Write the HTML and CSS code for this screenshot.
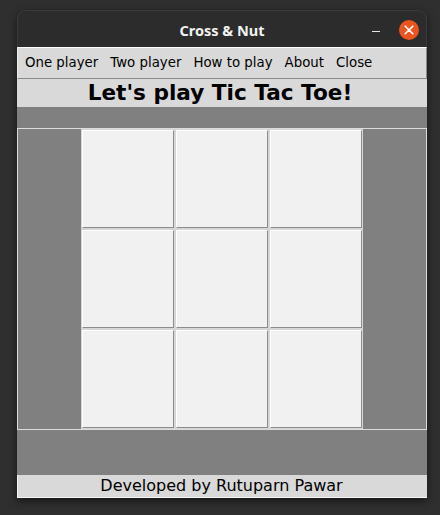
FILE: index.html
```html
<!DOCTYPE html>
<html lang="en">
<head>
<meta charset="utf-8">
<title>Cross &amp; Nut</title>
<link rel="stylesheet" href="styles.css">
</head>
<body>
<div class="window">
  <div class="titlebar">
    <div class="tb-spacer"></div>
    <div class="tb-title">Cross &amp; Nut</div>
    <div class="tb-controls">
      <span class="tb-min"><span class="tb-min-line"></span></span>
      <span class="tb-close">
        <svg width="20" height="20" viewBox="0 0 20 20"><circle cx="10" cy="10" r="10" fill="#e95420"/><path d="M6.2 6.2 L13.8 13.8 M13.8 6.2 L6.2 13.8" stroke="#fff" stroke-width="1.6" stroke-linecap="round"/></svg>
      </span>
    </div>
  </div>
  <div class="menubar">
    <span class="menu-item">One player</span>
    <span class="menu-item">Two player</span>
    <span class="menu-item">How to play</span>
    <span class="menu-item">About</span>
    <span class="menu-item">Close</span>
  </div>
  <div class="heading">Let's play Tic Tac Toe!</div>
  <div class="gap-top"></div>
  <div class="board-frame">
    <div class="board">
      <div class="cell"><button class="btn"></button></div>
      <div class="cell"><button class="btn"></button></div>
      <div class="cell"><button class="btn"></button></div>
      <div class="cell"><button class="btn"></button></div>
      <div class="cell"><button class="btn"></button></div>
      <div class="cell"><button class="btn"></button></div>
      <div class="cell"><button class="btn"></button></div>
      <div class="cell"><button class="btn"></button></div>
      <div class="cell"><button class="btn"></button></div>
    </div>
  </div>
  <div class="gap-bottom"></div>
  <div class="footer">Developed by Rutuparn Pawar</div>
</div>
</body>
</html>
```
FILE: styles.css
```css
html, body {
  margin: 0;
  padding: 0;
}
body {
  background: #2f2f2f;
  width: 440px;
  height: 515px;
  overflow: hidden;
  font-family: "DejaVu Sans", sans-serif;
}
.window {
  margin: 10px 0 0 17px;
  width: 410px;
  box-shadow: 0 3px 8px rgba(0, 0, 0, 0.55);
  border-radius: 9px 9px 0 0;
}
.titlebar {
  box-sizing: border-box;
  height: 37px;
  background: #2c2c2c;
  border: 1px solid #3b3b3b;
  border-bottom: none;
  border-radius: 9px 9px 0 0;
  display: grid;
  grid-template-columns: 1fr auto 1fr;
  align-items: center;
}
.tb-title {
  font-family: "Noto Sans", sans-serif;
  font-weight: bold;
  font-size: 14.5px;
  line-height: 36px;
  color: #f2f2f2;
  padding-top: 1px;
}
.tb-controls {
  justify-self: end;
  display: flex;
  align-items: center;
  gap: 13px;
  margin-right: 7px;
}
.tb-min {
  width: 20px;
  height: 20px;
  display: flex;
  align-items: center;
  justify-content: center;
}
.tb-min-line {
  display: block;
  width: 8px;
  height: 1.5px;
  background: #e6e6e6;
  margin-top: 4px;
}
.tb-close {
  width: 20px;
  height: 20px;
  display: block;
}
.tb-close svg {
  display: block;
}
.menubar {
  box-sizing: border-box;
  height: 32px;
  background: #d9d9d9;
  border-top: 1px solid #ffffff;
  border-left: 1px solid #ececec;
  border-right: 1px solid #8a8a8a;
  border-bottom: 1px solid #8a8a8a;
  display: flex;
  align-items: center;
  gap: 12px;
  padding-left: 7px;
}
.menu-item {
  font-size: 13.33px;
  line-height: 30px;
  color: #000;
}
.heading {
  height: 28px;
  background: #d9d9d9;
  text-align: center;
  font-weight: bold;
  font-size: 21.6px;
  line-height: 28px;
  color: #000;
  padding-right: 4px;
}
.gap-top {
  height: 21px;
  background: #808080;
}
.board-frame {
  box-sizing: border-box;
  height: 302px;
  background: #808080;
  border: 1px solid #dcdcdc;
  display: flex;
  justify-content: center;
}
.board {
  display: grid;
  grid-template-columns: repeat(3, 94px);
  grid-template-rows: repeat(3, 100px);
}
.cell {
  box-sizing: border-box;
  border: 1px solid #d6d6d6;
  display: flex;
}
.btn {
  flex: 1;
  margin: 0;
  padding: 0;
  box-sizing: border-box;
  background: #f1f1f1;
  border-style: solid;
  border-width: 1px;
  border-color: #ffffff #8c8c8c #8c8c8c #ffffff;
  font: inherit;
}
.gap-bottom {
  height: 45px;
  background: #808080;
}
.footer {
  box-sizing: border-box;
  height: 23px;
  background: #d9d9d9;
  border-left: 1px solid #f4f4f4;
  border-bottom: 1px solid #f4f4f4;
  text-align: center;
  font-size: 16px;
  line-height: 22px;
  color: #000;
  padding-right: 2px;
}
```
